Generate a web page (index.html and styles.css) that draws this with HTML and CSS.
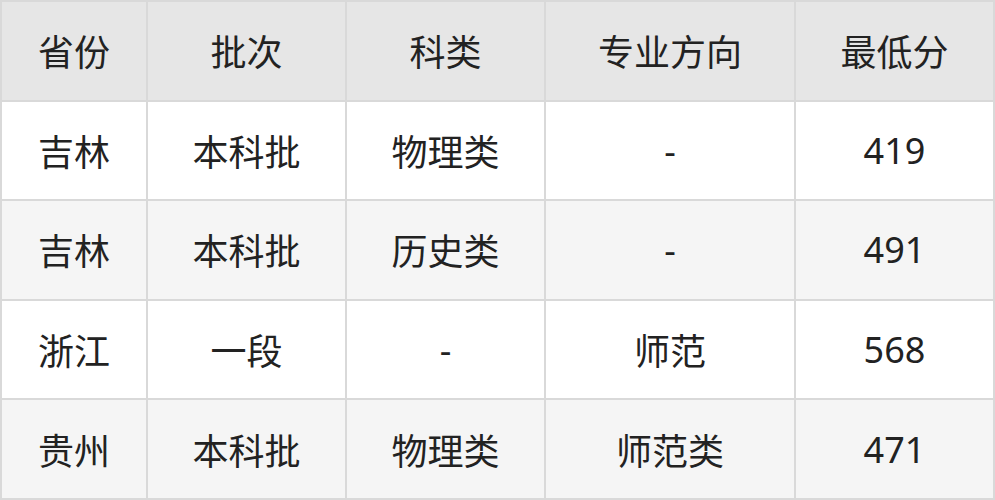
FILE: index.html
```html
<!DOCTYPE html>
<html lang="zh">
<head>
<meta charset="utf-8">
<link rel="stylesheet" href="styles.css">
</head>
<body>
<div class="table">
  <div class="cell head">省份</div>
  <div class="cell head">批次</div>
  <div class="cell head">科类</div>
  <div class="cell head">专业方向</div>
  <div class="cell head">最低分</div>

  <div class="cell">吉林</div>
  <div class="cell">本科批</div>
  <div class="cell">物理类</div>
  <div class="cell">-</div>
  <div class="cell">419</div>

  <div class="cell alt">吉林</div>
  <div class="cell alt">本科批</div>
  <div class="cell alt">历史类</div>
  <div class="cell alt">-</div>
  <div class="cell alt">491</div>

  <div class="cell">浙江</div>
  <div class="cell">一段</div>
  <div class="cell">-</div>
  <div class="cell">师范</div>
  <div class="cell">568</div>

  <div class="cell alt">贵州</div>
  <div class="cell alt">本科批</div>
  <div class="cell alt">物理类</div>
  <div class="cell alt">师范类</div>
  <div class="cell alt">471</div>
</div>
</body>
</html>
```
FILE: styles.css
```css
html, body {
  margin: 0;
  padding: 0;
  background: #ffffff;
}
.table {
  box-sizing: border-box;
  width: 995px;
  height: 500px;
  display: grid;
  grid-template-columns: 144fr 197fr 197fr 248fr 197fr;
  grid-template-rows: repeat(5, 1fr);
  gap: 2px;
  padding: 2px;
  background: #d9d9d9;
  font-family: "Noto Sans", "Noto Sans CJK SC", sans-serif;
  font-size: 36px;
  color: #222222;
}
.cell {
  display: flex;
  align-items: center;
  justify-content: center;
  background: #ffffff;
}
.head {
  background: #e6e6e6;
}
.alt {
  background: #f5f5f5;
}
```
